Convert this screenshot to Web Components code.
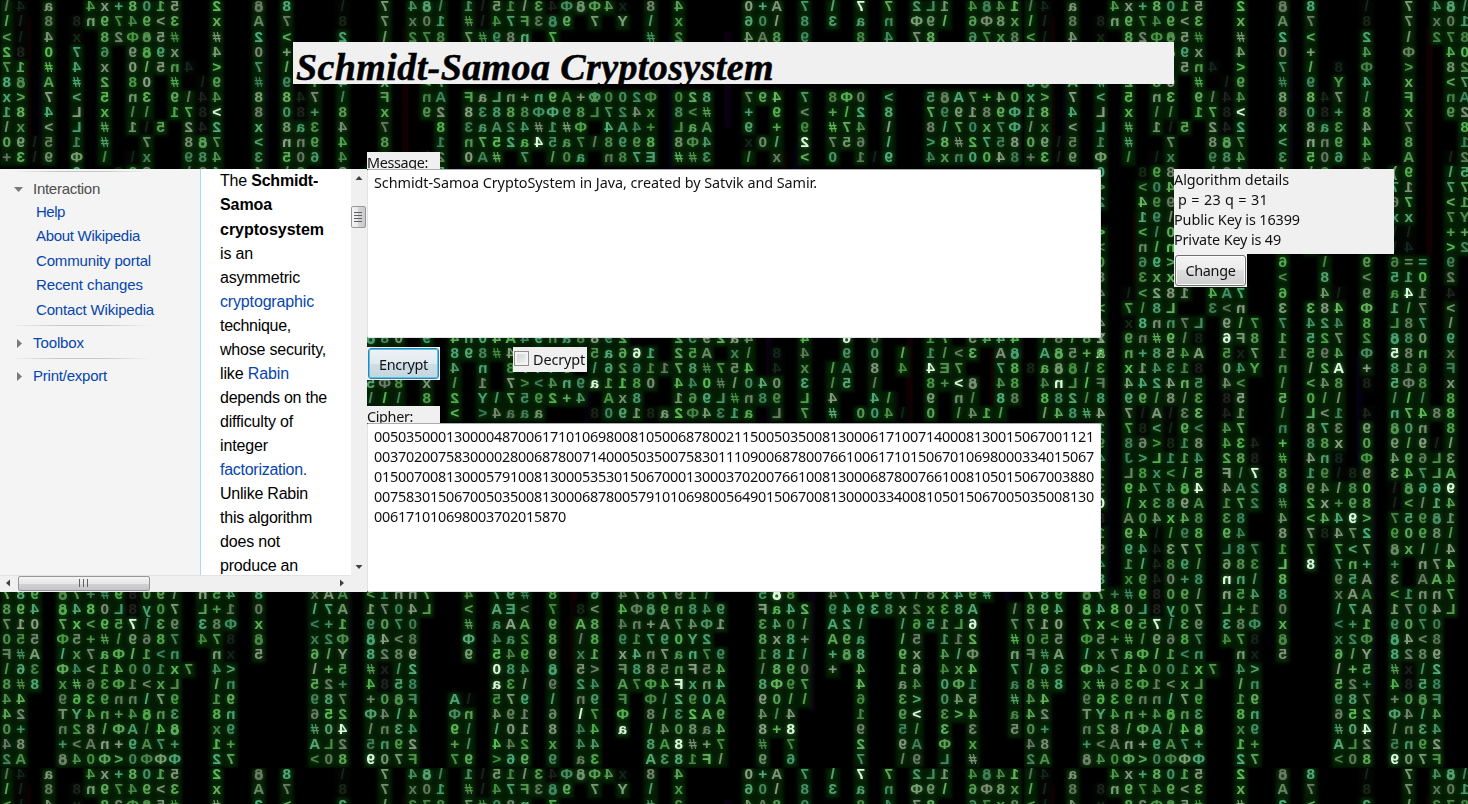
<!DOCTYPE html>
<html lang="en">
<head>
<meta charset="utf-8">
<title>Schmidt-Samoa Cryptosystem</title>
<style>
html,body{margin:0;height:100%;overflow:hidden;background:#000}
body{font:14.4px/20px "Noto Sans","Open Sans",sans-serif;color:#111}
</style>
</head>
<body>
<crypto-app></crypto-app>
<script>
const define = (name, html, init) => customElements.define(name, class extends HTMLElement {
  connectedCallback() {
    if (this.shadowRoot) return;
    const t = document.createElement('template');
    t.innerHTML = html;
    this.attachShadow({mode: 'open'}).append(t.content.cloneNode(true));
    if (init) init.call(this, this.shadowRoot);
  }
});

/* One line of text, tracked so that it takes the width given in "w". */
define('fit-text', `<style>:host{display:block;white-space:pre}span{display:inline-block}</style><span><slot></slot></span>`,
  function (root) {
    const s = root.querySelector('span'), n = this.textContent.length, w = +this.getAttribute('w');
    s.style.letterSpacing = ((w - s.getBoundingClientRect().width) / n) + 'px';
  });

/* Rows of the glyph rain, as "column:glyphs"; "!" lights up the glyph before it, "." is a faded one. */
const RAIN = `0:/. 3:a 6:4x+8015 15:2 18:@ 20:8 24:. 27:7 29:4@/ 33:1. 35:51/3.Φ@Φ4. 46:8 48:4 53:0+A 57:7 59:/ 61:7! 63:7 65:2L1 69:4@41
0:/. 3:8 5:. 6:n9749<3 15:x 18:A 20:7 24:. 27:7 29:x01 33:#. 35:47F3@9 42:7 44:Y 46:/ 48:x 53:60/ 57:8 59:3 61:a 63:n 65:Φ9/ 69:6Φ8x
0:<. 3:4 5:. 7:82Φ@5# 15:# 18:2 20:< 24:2 27:/ 29:278 33:7# 35:98n 39:7 46:# 48:2 53:4A8 57:9 61:8 63:4 65:78 69:67x8
0:2. 3:0 5:7 7:6 9:9@9x 15:4 18:0 20:+ 24:4 27:Φ 30:40
0:71 3:# 5:4 7:x 9:0/5n 13:. 15:> 18:7 20:/ 22:. 24:Φ 27:> 30:82
0:8@ 3:A 5:# 7:2 9:80 12:# 14:. 15:9 18:# 20:9 22:Y 24:4 27:x 30:<7
0:x> 3:7 5:< 7:5 9:n3 12:9 13:/. 15:4 18:8 20:8.7 24:/ 27:F 30:nA 33:FaLn+n9A+Φ 42:x002Φ 48:028 53:794 57:7 59:8Φ0 63:< 66:5@A7+40
0:18 3:4 5:L 7:x 9:// 12:1 13:7. 15:<! 18:8 20:0.+ 24:8 27:x 30:92 33:83888ΦΦ98L 43:724x 48:8<# 53:+ 55:9 57:< 59:+/2 63:8 66:799189Φ
0:/x 3:< 5:L 7:# 9:1. 11:5 13:2. 15:2 18:x 20:8a3 24:4 27:7 31:8 33:3aA24#1#Φ 43:4A4+ 48:LaA 53:9 55:+ 57:9 59:#74 63:/ 66:8/70x7Φ
0:09. 3:5 5:1 7:# 10:7 13:8@7 18:< 20:nn9 24:4 27:8 31:1 33:n752a4!5a7/ 43:8998 48:8Φ4 53:.0 55:/ 57:2! 59:756 63:/ 66:>8#2758
0:+3. 3:9 5:Φ 7:/ 9:. 10:x 13:984 18:3 20:506 24:4 27:A 30:.2 33:0A# 37:7 39:/0a 43:n87E 48:##3 53:/ 55:x 57:< 59:0 61:1.9 66:4xn0048
5:0 8:.98 13:/94 18:4 20:/9 24:8 26:)9 30:/5
5:> 8:<04 13:9/4 18:7 20:24 24:9 26:71 30:77
5:2 8:499 13:7/8 18:4 20:.2 24:4 26:67 30:<1
8:19/ 13:42 18:8 20:43 24:A 26:xx 30:7Y
5:> 8:</0 13:8 18:n 20:7 24:< 26:.. 30:++
5:< 8:n/n 18:2 20:7 24:4 26:.. 30:>2
5:0 8:69> 18:6 21:/ 24:9 26:6== 30:9
5:8 8:3xx4L 18:< 21:8 24:< 26:510 30:2
5:4 7:.<281 13:4A7 18:6 21:4. 24:9 26:a4!1 30:.
5:< 7:7/8L 13:3<n 18:3 20:384 24:Φ 26:1/7 30:<
5:4 7:.8nn7 12:L 14:9/7 18:7 20:424 24:8 26:L87 30:/
1:/8/8Y 5:2 7:9n#9/. 14:6!F8 18:1 20:527 24:2 26:@80 30:9 32:4n04A49na8892 48:2592a4 57:4 60:6! 62:0 66:17 69:54 71:44
1:A@5+a! 5:8 7:n+854A 14:5.7 18:1 20:594 24:Φ 26:5!8n 30:x 32:898#4+7x9/5a66!1 48:25A 52:x/ 55:. 57:4 60:9 62:0 64:/ 66:1/< 69:3 71:A@
0:.a@@/ 5:3 7:x1431. 14:04Y 18:n 20:/2A! 24:+ 26:816 30:F 32:4 34:n 36:87/49 42:/62611 48:78#7 52:54 55:. 57:x 59:/A 62:8 64:4 66:4!E7 71:78
1:4n!L/ 5:F 7:4424n5 14:4< 18:/ 20:<48 24:. 26:5Φ8 30:x 32:/ 34:1 36:7><4n 41:9a!1180 48:440#/04 55:0 57:3 59:/5 62:/ 66:8+<!@ 71:48
1:882/ 5:8 7:99/8/3 14:.5 18:5 20:0// 26:/// 30:8 32:2 34:Y/7592+ 41:4 43:Ax8 48:169L#n8 55:9 57:L 59:4 62:4/ 66:9 68:n/ 71:88
1:/48# 5:4 7:7.A.33 14:.1 18:/ 20:L<1 24:. 26:n748 30:8 32:< 34:>4aaa 42:.091.a 48:2Φ431a 55:L 57:7 59:# 61:004. 66:0 68:/41 71:/
5:1 7:7.<.9< 14:47 18:n 20:873 24:9 26:@0n 30:8
5:9 7:86>.18 14:43. 18:+ 20:88x 24:0 26:9/9. 30:/
5:4 7:J>L114 14:28. 18:# 20:4n. 24:Φ 26:496L3
5:1 7:L8x</5 14:F/7! 18:8 20:19.. 24:9 26:347LA
5:3 7:9474@4! 14:4A2 18:8 20:94/80 26:.@669!
5:0! 7:/x389A 14:172 18:# 20:2x+98 26:.</14
5:. 7:A04x48 14:38 18:4 20:<440 23:9!> 26:759@1
5:1 7:94./98 14:94 18:8 20:7.472 26:9098/
5:9 7:94.377 14:L87 18:1 20:7 22:7<7 26:@x//4
5:4 7:1/.89/ 14:683 18:L 20:8! 22:7n+ 26:+ 28:n74
5:8 7:x9.0+8 14:n!n/ 18:8 22:95A 26:3 28:AA4
0:789 4:@7+#9.09/ 14:n54 18:8 22:xAA 26:<1nn7 33:4 35:79# 39:8 42:6 44:478791/ 54:5@!8 59:477497/8x49#
0:894 4:@480L.y07 14:L+1 18:0 22:/7A 26:1704L 33:< 35:AE< 39:7 41:.< 44:4Φ@9n849 54:Fa42 59:94938x2x38A 72:/
0:710 4:7x<957!/39 14:38Φ 18:x 22:<+1 26:9070 33:# 35:aAA 39:9 41:A8 44:4n+A74Φ1 54:340/ 59:A2/ 64:/651L6! 72:7
0:055 4:Φ5+#/9687 14:47. 18:@ 22:x2Φ 26:@4<8 33:Φ 35:4a2 39:8 41:/8 44:91790Y2 54:8x8+ 59:A9a 64:/5 67:112 72:#
0:F#A 4:/x7aΦ/1<n 15:n. 18:5 22:6/Y 26:8289 33:9 35:549 39:9 41:x1 44:x4n7an79 54:181/ 59:+@8 64:9x 67:4/Φ 72:n
0:/63 4:Φ4<14001x7 15:4> 22:/+5 26:#./2 35:0!84 39:@ 41:5> 44:F885nF54 54:/890 59:+ 61:4 64:16 67:4x4 72:7
0:8#8 4:x#63Φ1<xL 15:/n 22:52+ 26:4.58 35:a!3/ 39:9 41:24 44:A7Φ4F!xn4 54:8Φ97 61:4 64:a4 67:0Φ1 72:a
0:44 4:9639nn/79 15:19 22:987 26:+0@F 32:A. 35:579 39:/ 41:n9 44:F 46:Φ/290A 54:90// 61:6 64:3> 67:045 72:#
0:42 4:TY4n+4@n3 15:8n 22:652 26:Φ4/4 32:Φn 35:491 39:6 41:/!7 44:Φ 46:8/32A9 54:4/4 61:1 64:9<! 67:3>4 72:a
0:0+ 4:n28/ΦA/4@ 15:x9 22:#04! 26:/n34 32:9/ 35:/01 39:8 41:44 44:a! 46:/408a4 54:8+8! 61:9 64:5/ 67:3 69:3 72:5
0:48 4:+<An+9A7+ 15:1+ 22:AL2 26:5n92 32:+/ 35:442 39:x 41:44 46:8A8!#+7 54:# 56:7 61:2 64:9A 67:Φ 69:x
0:2A 4:@40Φ>0ΦΦΦ 15:27 22:<08 26:9!07F 32:79 35:>69 39:9 41:a3 46:A381F/ 54:9 56:6 61:7 64:/9 67:L 69:#`;

define('glyph-rain', `<style>:host{display:block;width:100%;height:100%}canvas{display:block}</style><canvas width="1468" height="804"></canvas>`,
  function (root) {
    const layer = () => {
      const c = document.createElement('canvas');
      c.width = 1024; c.height = 768;
      return c;
    };
    const tile = layer(), glow = layer(), glyphs = layer();
    const g = tile.getContext('2d'), b = glow.getContext('2d'), t = glyphs.getContext('2d');
    let seed = 7;
    const rnd = () => (seed = (seed * 16807) % 2147483647) / 2147483647;
    const hues = [[88,160,88],[94,166,88],[80,155,105],[125,150,120],[74,160,112],[85,172,80],[110,148,105]];
    t.textAlign = 'center'; t.textBaseline = 'middle';
    t.font = 'bold 14px "Liberation Sans"';
    RAIN.split('\n').forEach((line, r) => line.trim().split(' ').forEach(seg => {
      const i = seg.indexOf(':'), s = seg.slice(i + 1);
      let c = +seg.slice(0, i);
      for (let k = 0; k < s.length; k++) {
        if (s[k] === '!') continue;
        const dim = s[k] === '.', hot = s[k + 1] === '!';
        b.fillStyle = dim ? '#040604' : '#031c03';
        b.fillRect(c * 14 - .5, r * 15.06 - .5, 14.5, 16);
        const f = hot ? 1 : dim ? .25 : .8 + rnd() * .3;
        const rgb = (hot ? [215,255,215] : hues[Math.floor(rnd() * hues.length)]).map(v => Math.min(255, v * f | 0));
        t.fillStyle = `rgb(${rgb})`;
        const ch = dim ? '4x/8'[Math.floor(rnd() * 4)] : s[k];
        /* digits and letters are mirrored, signs keep their direction */
        t.setTransform('<>/'.includes(ch) ? 1.1 : -1.1, 0, 0, .98, c * 14 + 6.7, r * 15.06 + 7.6);
        t.fillText(ch === '@' ? '8' : ch, 0, 0);
        if (ch === '@') t.fillText('o', 0, 1);
        c++;
      }
    }));
    g.fillStyle = '#000'; g.fillRect(0, 0, 1024, 768);
    for (let c = 0; c < 73; c++) if (rnd() < .4) {
      g.fillStyle = ['#0b0010', '#100003', '#060012'][c % 3];
      g.fillRect(c * 14 + 10, rnd() * 500, 7, 60 + rnd() * 200);
    }
    g.filter = 'blur(1.5px)'; g.drawImage(glow, 0, 0);
    g.filter = 'blur(2px)'; g.globalAlpha = .45; g.drawImage(glyphs, 0, 0);
    g.filter = 'blur(.7px)'; g.globalAlpha = 1; g.drawImage(glyphs, 0, 0);
    const out = root.querySelector('canvas').getContext('2d');
    out.drawImage(tile, 0, 0); out.drawImage(tile, 1024, 0);
    out.drawImage(tile, 0, 768); out.drawImage(tile, 1024, 768);
  });

define('title-bar', `<style>
:host{display:block;width:881px;height:42px;background:#f0f0f0;overflow:hidden;color:#000}
fit-text{font:italic bold 38px/42px "Liberation Serif",serif;padding:4px 0 0 3px;-webkit-text-stroke:.5px #000}
</style><fit-text w="478">Schmidt-Samoa Cryptosystem</fit-text>`);

define('field-label', `<style>:host{display:block;box-sizing:border-box;width:73px;height:17px;background:#f0f0f0;overflow:hidden;line-height:20px;padding-top:1px}</style><slot></slot>`);

define('text-box', `<style>
:host{display:block;box-sizing:border-box;width:734px;height:169px;background:#fff;border:1px solid #e2e3ea;border-top-color:#abadb3;border-radius:2px;padding:3px 6px}
</style><slot></slot>`);

define('push-button', `<style>
:host{display:block;width:73px;height:33px;background:#f0f0f0;box-sizing:border-box;padding:1px}
button{all:unset;box-sizing:border-box;display:flex;justify-content:center;width:71px;height:31px;border:1px solid #707070;border-radius:3px;
 box-shadow:inset 0 0 0 1px #fcfcfc;background:linear-gradient(#f2f2f2,#ebebeb 50%,#dddddd 50%,#cfcfcf);padding-top:5px}
:host([focused]) button{padding-top:6px;border-color:#3c7fb1;box-shadow:inset 0 0 0 1px #48c8f0;background:linear-gradient(#edf2f6,#e1eaf0 50%,#d0dee6 50%,#c4d5de)}
</style><button><slot></slot></button>`);

define('check-box', `<style>
:host{display:flex;width:74px;height:25px;background:#f0f0f0;box-sizing:border-box;padding:3px 0 0 1px;gap:4px}
i{box-sizing:border-box;width:15px;height:15px;margin-top:1px;border:1px solid #8e8f8f;background:linear-gradient(135deg,#cbcfd5,#f6f6f6);box-shadow:inset 0 0 0 2px #f4f4f4}
</style><i></i><slot></slot>`);

define('wiki-nav', `<style>
:host{display:block;width:200px;height:406px;background:#f4f4f4;color:#4d4d4d;font:15px/24.4px "Liberation Sans",Arial,sans-serif;overflow:hidden}
hr{border:0;height:1px;width:140px;margin:0 0 0 11px;background:linear-gradient(90deg,#f4f4f4,#c8c8c8 33%,#c8c8c8 66%,#f4f4f4)}
.h{display:flex;align-items:center;height:17px;gap:10px}
.h svg{width:9px;height:9px;margin-left:14px}
.links{padding:2px 0 3px 36px}
.link,.links{color:#0645ad}
.links fit-text{height:24.4px}
</style>
<hr style="margin-top:2px">
<div class="h" style="margin-top:9px"><svg viewBox="0 0 9 9"><path d="M0 2h9L4.5 7z" fill="#797979"/></svg><fit-text w="67">Interaction</fit-text></div>
<div class="links"><fit-text w="29">Help</fit-text><fit-text w="104">About Wikipedia</fit-text><fit-text w="115">Community portal</fit-text><fit-text w="107">Recent changes</fit-text><fit-text w="118">Contact Wikipedia</fit-text></div>
<hr>
<div class="h link" style="margin:9px 0 6px"><svg viewBox="0 0 9 9"><path d="M3 0l5 4.5L3 9z" fill="#797979"/></svg><fit-text w="51">Toolbox</fit-text></div>
<hr>
<div class="h link" style="margin-top:9px"><svg viewBox="0 0 9 9"><path d="M3 0l5 4.5L3 9z" fill="#797979"/></svg><fit-text w="74">Print/export</fit-text></div>`);

define('wiki-article', `<style>
:host{display:block;box-sizing:border-box;width:151px;height:406px;background:#fff;border-left:1px solid #a7d7f9;padding:.45px 0 0 19px;color:#000;font:16px/24.04px "Liberation Sans",Arial,sans-serif;overflow:hidden}
a{color:#0645ad}
</style>
<fit-text w="98">The <b>Schmidt-</b></fit-text><fit-text w="52"><b>Samoa</b></fit-text><fit-text w="104"><b>cryptosystem</b></fit-text>
<fit-text w="33">is an</fit-text><fit-text w="80">asymmetric</fit-text><fit-text w="94"><a>cryptographic</a></fit-text><fit-text w="71">technique,</fit-text><fit-text w="106">whose security,</fit-text><fit-text w="69">like <a>Rabin</a></fit-text><fit-text w="107">depends on the</fit-text><fit-text w="73">difficulty of</fit-text><fit-text w="48">integer</fit-text><fit-text w="87"><a>factorization.</a></fit-text><fit-text w="88">Unlike Rabin</fit-text><fit-text w="92">this algorithm</fit-text><fit-text w="60">does not</fit-text><fit-text w="78">produce an</fit-text>`);

define('scroll-bar', `<style>
:host{display:block;box-sizing:border-box;width:16px;height:406px;background:#f0f0f0}
</style><slot></slot>`);

define('browser-pane', `<style>
:host{display:grid;grid-template-columns:200px 151px 16px;grid-template-rows:406px 17px;width:367px;height:423px;background:#f0f0f0}
svg{display:block}
.bottom{grid-column:1/4}
</style>
<wiki-nav></wiki-nav><wiki-article></wiki-article>
<scroll-bar><svg width="15" height="406" viewBox="0 0 15 406">
<defs><linearGradient id="v"><stop stop-color="#f5f5f5"/><stop offset=".5" stop-color="#e6e6e6"/><stop offset=".5" stop-color="#d6d6d8"/><stop offset="1" stop-color="#c8c8ca"/></linearGradient></defs>
<path d="M4.5 11l3.5-4 3.500 4z" fill="#404040"/><rect x=".5" y="37.5" width="14" height="21" rx="1.5" fill="url(#v)" stroke="#979797"/>
<path d="M3 43.500h8M3 46.500h8M3 49.500h8M3 52.500h8" stroke="#606060"/><path d="M4.500 396h7l-3.500 4z" fill="#404040"/></svg></scroll-bar>
<svg class="bottom" width="367" height="17" viewBox="0 0 367 17">
<defs><linearGradient id="h" x2="0" y2="1"><stop stop-color="#f5f5f5"/><stop offset=".5" stop-color="#e6e6e6"/><stop offset=".5" stop-color="#d2d2d4"/><stop offset="1" stop-color="#c4c4c6"/></linearGradient></defs>
<path d="M0 .5h350" stroke="#e3e3e3"/><path d="M10 4.500v7l-4-3.500z" fill="#404040"/><path d="M340 4.500v7l4-3.500z" fill="#404040"/>
<rect x="18.500" y="1.500" width="131" height="14" rx="1.500" fill="url(#h)" stroke="#979797"/><path d="M79.500 4v8M83.500 4v8M87.500 4v8" stroke="#606060"/></svg>`);

define('crypto-form', `<style>
:host{display:block;width:734px}
.actions{display:flex;gap:73px;height:59px;padding-top:9px}
</style>
<field-label><fit-text w="61">Message:</fit-text></field-label>
<text-box><fit-text w="443">Schmidt-Samoa CryptoSystem in Java, created by Satvik and Samir.</fit-text></text-box>
<div class="actions"><push-button focused><fit-text w="49">Encrypt</fit-text></push-button><check-box><fit-text w="52">Decrypt</fit-text></check-box></div>
<field-label><fit-text w="46">Cipher:</fit-text></field-label>
<text-box><fit-text w="720">005035000130000487006171010698008105006878002115005035008130006171007140008130015067001121</fit-text><fit-text w="720">003702007583000028006878007140005035007583011109006878007661006171015067010698000334015067</fit-text><fit-text w="720">015007008130005791008130005353015067000130003702007661008130006878007661008105015067003880</fit-text><fit-text w="720">007583015067005035008130006878005791010698005649015067008130000334008105015067005035008130</fit-text><fit-text w="192">006171010698003702015870</fit-text></text-box>`);

define('key-details', `<style>
:host{display:block;width:220px}
.card{height:84px;padding-top:1px;background:#f0f0f0}
</style>
<div class="card"><fit-text w="115">Algorithm details</fit-text><fit-text w="94"> p = 23 q = 31</fit-text><fit-text w="126">Public Key is 16399</fit-text><fit-text w="107">Private Key is 49</fit-text></div>
<push-button><fit-text w="50">Change</fit-text></push-button>`);

define('crypto-app', `<style>
:host{display:grid;width:1468px;height:804px;overflow:hidden}
glyph-rain,.page{grid-area:1/1}
.page{position:relative}
title-bar{margin:42px 0 68px 293px}
.columns{display:flex;align-items:flex-start}
browser-pane{margin-top:17px}
key-details{margin:17px 0 0 73px}
</style>
<glyph-rain></glyph-rain>
<div class="page"><title-bar></title-bar><div class="columns"><browser-pane></browser-pane><crypto-form></crypto-form><key-details></key-details></div></div>`);
</script>
</body>
</html>
